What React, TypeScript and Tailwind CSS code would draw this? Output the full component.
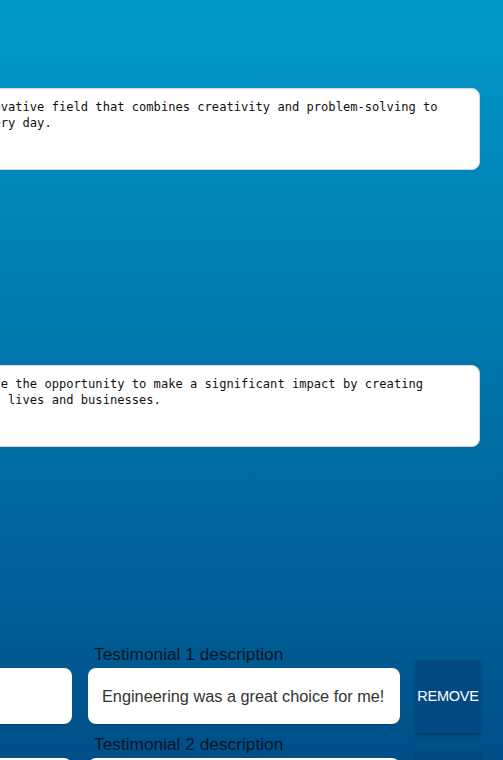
import React from "react";

const mono = { fontFamily: '"DejaVu Sans Mono", "Liberation Mono", monospace' };

function Row({ n, name, desc }: { n: number; name: string; desc: string }) {
  return (
    <div className="flex items-start gap-4">
      <div className="flex w-[312px] flex-col">
        <label className="ml-[6px] mb-[5px] text-[17.3px] leading-[18px] text-[#0b1526]">
          Testimonial {n} name
        </label>
        <input
          readOnly
          value={name}
          className="h-[56px] rounded-lg bg-white px-[14px] text-[16.3px] text-[#333] shadow-[0_1px_1px_rgba(0,0,0,0.25)] outline-none"
        />
      </div>
      <div className="flex w-[312px] flex-col">
        <label className="ml-[6px] mb-[5px] text-[17.3px] leading-[18px] text-[#0b1526]">
          Testimonial {n} description
        </label>
        <input
          readOnly
          value={desc}
          className="h-[56px] rounded-lg bg-white px-[14px] text-[16.3px] text-[#333] shadow-[0_1px_1px_rgba(0,0,0,0.25)] outline-none"
        />
      </div>
      <button className="mt-[15px] h-[73px] w-[64px] rounded-[3px] bg-[#024a84] p-0 text-[14.5px] font-medium uppercase tracking-[-0.2px] text-white shadow-[0_2px_4px_rgba(0,0,0,0.3)]">
        Remove
      </button>
    </div>
  );
}

export default function App() {
  return (
    <div
      className="h-[760px] w-[503px] overflow-hidden bg-[linear-gradient(to_bottom,#009ac9,#004f88)]"
      style={{ fontFamily: '"Liberation Sans", Arial, sans-serif' }}
    >
      <div className="ml-[-240px] flex w-[720px] flex-col pt-[88px]">
        <textarea
          readOnly
          rows={4}
          style={mono}
          className="h-[82px] resize-none rounded-lg border border-[#d0d6dc] bg-white pt-[10px] pb-[6px] pl-[14px] pr-[16px] text-[12.1px] leading-[16px] text-[#111] outline-none"
          defaultValue={
            "Software engineering is an innovative field that combines creativity and problem-solving to improve the lives of people every day."
          }
        />
        <textarea
          readOnly
          rows={4}
          style={mono}
          className="mt-[195px] h-[82px] resize-none rounded-lg border border-[#d0d6dc] bg-white pt-[10px] pb-[6px] pl-[14px] pr-[16px] text-[12.1px] leading-[16px] text-[#111] outline-none"
          defaultValue={
            "As a software engineer, you have the opportunity to make a significant impact by creating solutions that enhance people's lives and businesses."
          }
        />
        <div className="mt-[198px] flex flex-col gap-[2px]">
          <Row n={1} name="Jane Doe" desc="Engineering was a great choice for me!" />
          <Row n={2} name="John Smith" desc="I love building things every day." />
        </div>
      </div>
    </div>
  );
}
